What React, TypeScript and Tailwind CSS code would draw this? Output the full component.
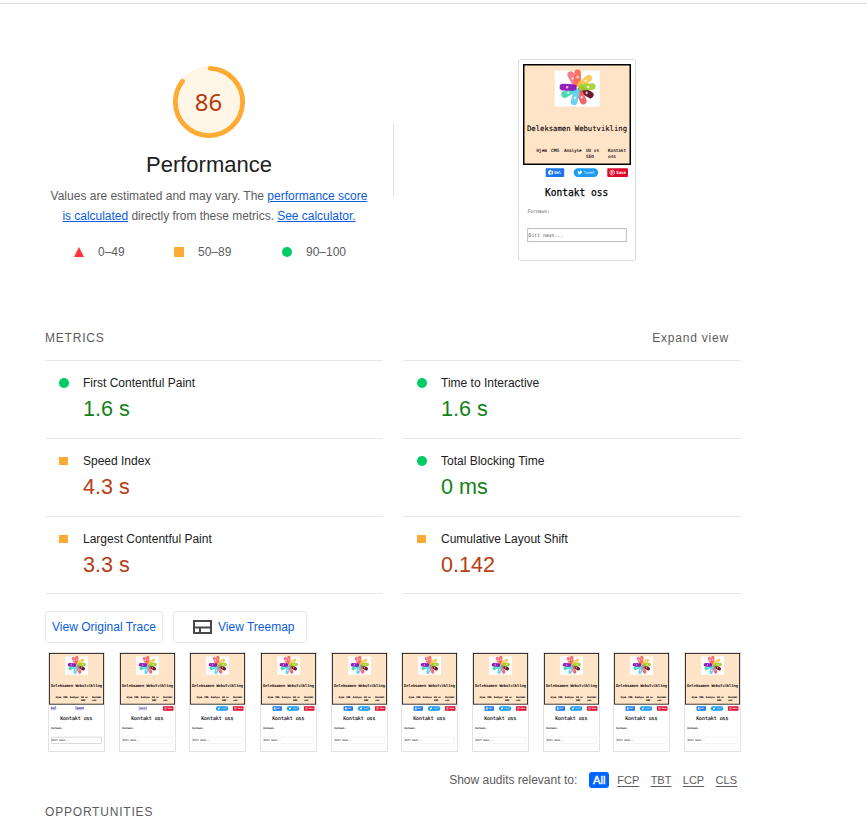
import React from "react";

type Social = "links" | "tweetLink" | "tweet" | "all";

const petals = [
  { angle: -28, color: "#f5718a" },
  { angle: 0, color: "#fb6a50" },
  { angle: 50, color: "#f9c851" },
  { angle: 242, color: "#3fd6ae" },
  { angle: 120, color: "#5e0a20" },
  { angle: 157, color: "#f45a5c" },
  { angle: 194, color: "#5fd0f0" },
  { angle: 86, color: "#a3d02f" },
  { angle: 272, color: "#9010b8" },
];

function Flower() {
  return (
    <g>
      <rect x="31.7" y="6.7" width="45" height="36" fill="#fdfeff" />
      {petals.map((p) => (
        <g key={p.angle} transform={`translate(54.6 23.6) rotate(${p.angle})`}>
          <rect x="-3.3" y="-18" width="6.6" height="17" rx="3.3" fill={p.color} fillOpacity=".93" />
          <circle cx="0" cy="-10.5" r="1.3" fill="#fff" fillOpacity=".7" />
        </g>
      ))}
    </g>
  );
}

function T({ x, y, w, s, fill = "#000", bold = 0, weight = 400, children }: { x: number; y: number; w: number; s: number; fill?: string; bold?: number; weight?: number; children: string }) {
  return (
    <text x={x} y={y} textLength={w} lengthAdjust="spacingAndGlyphs" fontSize={s} fill={fill} fontWeight={weight} stroke={fill} strokeWidth={bold}>
      {children}
    </text>
  );
}

function PagePreview({ social, small = false, className }: { social: Social; small?: boolean; className: string }) {
  const b = small ? 0.25 : 0.1;
  const inputStroke = !small || social === "links" ? "#aaa" : "#e4e4e4";
  return (
    <svg viewBox="0 0 108 192" preserveAspectRatio="none" className={`block font-['DejaVu_Sans_Mono',monospace] ${className}`}>
      <rect width="108" height="192" fill="#fff" />
      <rect x=".75" y=".75" width="106.5" height="99.5" fill="#ffe4c8" stroke="#000" strokeWidth="1.5" />
      <Flower />
      <T x={4} y={67} w={100} s={7.4} bold={b}>Deleksamen Webutvikling</T>
      <T x={13.5} y={88.3} w={10.5} s={4.3} bold={b}>Hjem</T>
      <T x={28} y={88.3} w={8.3} s={4.3} bold={b}>CMS</T>
      <T x={41} y={88.3} w={17.5} s={4.3} bold={b}>Analyse</T>
      <T x={63} y={88.3} w={13} s={4.3} bold={b}>UU vs</T>
      <T x={63} y={93.6} w={8} s={4.3} bold={b}>SEO</T>
      <T x={85} y={88.3} w={18} s={4.3} bold={b}>Kontakt</T>
      <T x={85} y={93.6} w={8} s={4.3} bold={b}>oss</T>
      {social === "links" && (
        <>
          <T x={3.5} y={109.5} w={11} s={6} fill="#2a1c9c" bold={0.3}>Del</T>
          <T x={51} y={109.5} w={18} s={6} fill="#2a1c9c" bold={0.3}>Tweet</T>
          <path d="M3.5 111h11M51 111h18" stroke="#2a1c9c" strokeWidth=".6" />
        </>
      )}
      {social === "tweetLink" && (
        <>
          <T x={36} y={109.5} w={17} s={6} fill="#5a4ab4" bold={0.3}>Tweet</T>
          <path d="M36 111h17" stroke="#5a4ab4" strokeWidth=".8" />
        </>
      )}
      {social === "all" && (
        <>
          <rect x="22.7" y="104.3" width="18.5" height="8.6" rx="1" fill="#1976ee" />
          <circle cx="27.6" cy="108.6" r="2.5" fill="#fff" />
          <path d="M28 111V107.6q0-.9 1-.8M26.8 108.8h2" fill="none" stroke="#1976ee" strokeWidth=".8" />
          <T x={31.3} y={110.3} w={6.5} s={4.4} fill="#fff" weight={700}>Del</T>
        </>
      )}
      {(social === "all" || social === "tweet") && (
        <>
          <rect x="50.7" y="104.3" width="24.5" height="8.6" rx="4.3" fill="#1d9bf0" />
          <path transform="translate(54.5 106.2) scale(.2)" d="M24 4.6a10 10 0 0 1-2.8.8 5 5 0 0 0 2.1-2.7 10 10 0 0 1-3.1 1.2 4.9 4.9 0 0 0-8.4 4.5A14 14 0 0 1 1.7 3.1a4.9 4.9 0 0 0 1.5 6.6 5 5 0 0 1-2.2-.6 4.9 4.9 0 0 0 3.9 4.9 5 5 0 0 1-2.2 0 4.9 4.9 0 0 0 4.6 3.4A10 10 0 0 1 0 19.5 14 14 0 0 0 21.5 7a10 10 0 0 0 2.5-2.4z" fill="#fff" />
          <T x={60.8} y={110} w={11} s={4.2} fill="#e6f5ff">Tweet</T>
        </>
      )}
      {social !== "links" && (
        <>
          <rect x="84.3" y="104.3" width="20.7" height="8.6" rx="1" fill="#e00a2c" />
          <circle cx="89.2" cy="108.6" r="2.4" fill="none" stroke="#fff" strokeWidth=".6" />
          <path d="M88.3 111l1-3.5M88.2 108.8q-.6-1.8 1-1.8t1 1.4-1.2 1.1" fill="none" stroke="#fff" strokeWidth=".6" />
          <T x={93.2} y={110.2} w={9.8} s={4.3} fill="#fff" weight={700}>Save</T>
        </>
      )}
      <T x={22} y={131.7} w={63.3} s={10} bold={0.25}>Kontakt oss</T>
      <T x={4.5} y={149.3} w={22.5} s={4.8} fill={small ? "#222" : "#555"} bold={small ? 0.2 : 0}>Fornavn:</T>
      <rect x="4.7" y="164.7" width="98.5" height="13" fill="#fff" stroke={inputStroke} strokeWidth=".8" />
      <T x={5.6} y={173.3} w={34.5} s={5} fill="#555" bold={small ? 0.2 : 0}>Ditt navn...</T>
    </svg>
  );
}

function Gauge() {
  const c = 2 * Math.PI * 33.6;
  return (
    <svg viewBox="0 0 72 72" className="block size-[72px] font-['Noto_Sans',sans-serif]">
      <circle cx="36" cy="36" r="36" fill="#fff6e8" />
      <circle cx="36" cy="36" r="33.6" fill="none" stroke="#fa3" strokeWidth="4.8" strokeLinecap="round" strokeDasharray={`${0.86 * c - 2.4} ${c}`} transform="rotate(-88 36 36)" />
      <text x="35.6" y="44.8" textAnchor="middle" fontSize="24" fill="#b83a0b">86</text>
    </svg>
  );
}

type Status = "pass" | "average" | "fail";

function Metric({ name, value, status }: { name: string; value: string; status: Status }) {
  const pass = status === "pass";
  return (
    <div className="flex h-[78px] border-t border-[#e8e8e8] pl-[14px]">
      <span className={pass ? "mt-[17px] size-[10px] rounded-full bg-[#0c6]" : "mt-[18px] mr-px h-2 w-[9px] bg-[#fa3]"} />
      <div className="ml-[14px] pt-[14px]">
        <div className="text-[12px] leading-4 text-[#212121]">{name}</div>
        <div className={`mt-[6px] text-[21.6px] leading-6 ${pass ? "text-[#128218]" : "text-[#b83c14]"}`}>{value}</div>
      </div>
    </div>
  );
}

const leftMetrics: [string, string, Status][] = [
  ["First Contentful Paint", "1.6 s", "pass"],
  ["Speed Index", "4.3 s", "average"],
  ["Largest Contentful Paint", "3.3 s", "average"],
];
const rightMetrics: [string, string, Status][] = [
  ["Time to Interactive", "1.6 s", "pass"],
  ["Total Blocking Time", "0 ms", "pass"],
  ["Cumulative Layout Shift", "0.142", "average"],
];
const frames: Social[] = ["links", "tweetLink", "tweet", "all", "all", "all", "all", "all", "all", "all"];

export default function App() {
  return (
    <div className="h-[828px] w-[867px] overflow-hidden bg-white pt-[3px] font-['Liberation_Sans',Arial,sans-serif] text-[12px] text-[#5c5c5c]">
      <div className="h-px bg-[#e0e0e0]" />
      <main className="ml-[45px] w-[696px]">
        <section className="flex h-[257px]">
          <div className="flex w-[328px] flex-col items-center pt-[62px]">
            <Gauge />
            <h1 className="mt-[13px] text-[22px] leading-7 text-[#212121]">Performance</h1>
            <p className="mt-[7px] text-center leading-5 whitespace-nowrap">
              Values are estimated and may vary. The <a className="text-[#0a5de0] underline">performance score</a>
              <br />
              <span className="tracking-[-0.03px]">
                <a className="text-[#0a5de0] underline">is calculated</a> directly from these metrics. <a className="text-[#0a5de0] underline">See calculator.</a>
              </span>
            </p>
            <div className="mt-[18px] flex h-4 w-full items-center pl-[29px] leading-4">
              <svg viewBox="0 0 10 10" className="size-[10px]"><path d="M5 0L10 10H0z" fill="#f33" /></svg>
              <span className="ml-[14px] w-[76px]">0–49</span>
              <span className="size-[10px] bg-[#fa3]" />
              <span className="ml-[14px] w-[84px]">50–89</span>
              <span className="size-[10px] rounded-full bg-[#0c6]" />
              <span className="ml-[14px]">90–100</span>
            </div>
          </div>
          <div className="mt-[120px] ml-[20px] h-[72px] w-px bg-[#dedede]" />
          <div className="mt-[55px] ml-[124px] h-[202px] w-[118px] rounded-[3px] border border-[#dcdcdc] p-1">
            <PagePreview social="all" className="h-[192px] w-[108px]" />
          </div>
        </section>

        <div className="mt-[69px] flex h-[30px] justify-between pr-3 leading-4">
          <h2 className="tracking-[0.8px]">METRICS</h2>
          <span className="tracking-[0.8px]">Expand view</span>
        </div>

        <section className="grid h-[234px] grid-cols-2 gap-x-5">
          <div className="h-[234px] border-b border-[#e8e8e8]">
            {leftMetrics.map(([n, v, s]) => <Metric key={n} name={n} value={v} status={s} />)}
          </div>
          <div className="h-[234px] border-b border-[#e8e8e8]">
            {rightMetrics.map(([n, v, s]) => <Metric key={n} name={n} value={v} status={s} />)}
          </div>
        </section>

        <div className="mt-[17px] flex gap-[10px] text-[#0a5de0]">
          <button className="h-8 w-[118px] rounded-[3px] border border-[#e8e8e8] whitespace-nowrap">View Original Trace</button>
          <button className="flex h-8 w-[134px] items-center rounded-[3px] border border-[#e8e8e8] pl-[19px] whitespace-nowrap">
            <svg viewBox="0 0 19 14" className="h-[14px] w-[19px]"><path d="M1 1H18V13H1zM1 7.5H18M7 7.5V13" fill="none" stroke="#484848" strokeWidth="2" /></svg>
            <span className="ml-[6px]">View Treemap</span>
          </button>
        </div>

        <div className="mt-[9px] ml-[3px] flex w-[693px] justify-between">
          {frames.map((f, i) => (
            <div key={i} className="h-[100px] w-[57px] border border-[#e2e2e2]">
              <PagePreview small social={f} className="h-[98px] w-[55px]" />
            </div>
          ))}
        </div>

        <div className="mt-[20px] flex h-4 items-center justify-end pr-1 leading-4">
          <span className="mr-[12px]">Show audits relevant to:</span>
          <span className="mr-[8px] h-4 w-5 rounded-[3px] bg-[#06f] text-center text-[11px] text-white [-webkit-text-stroke:0.4px_white]">All</span>
          <span className="flex gap-[11.4px] text-[11px] underline underline-offset-2"><span>FCP</span><span>TBT</span><span>LCP</span><span>CLS</span></span>
        </div>
        <h2 className="mt-[16px] leading-4 tracking-[0.8px]">OPPORTUNITIES</h2>
      </main>
    </div>
  );
}
